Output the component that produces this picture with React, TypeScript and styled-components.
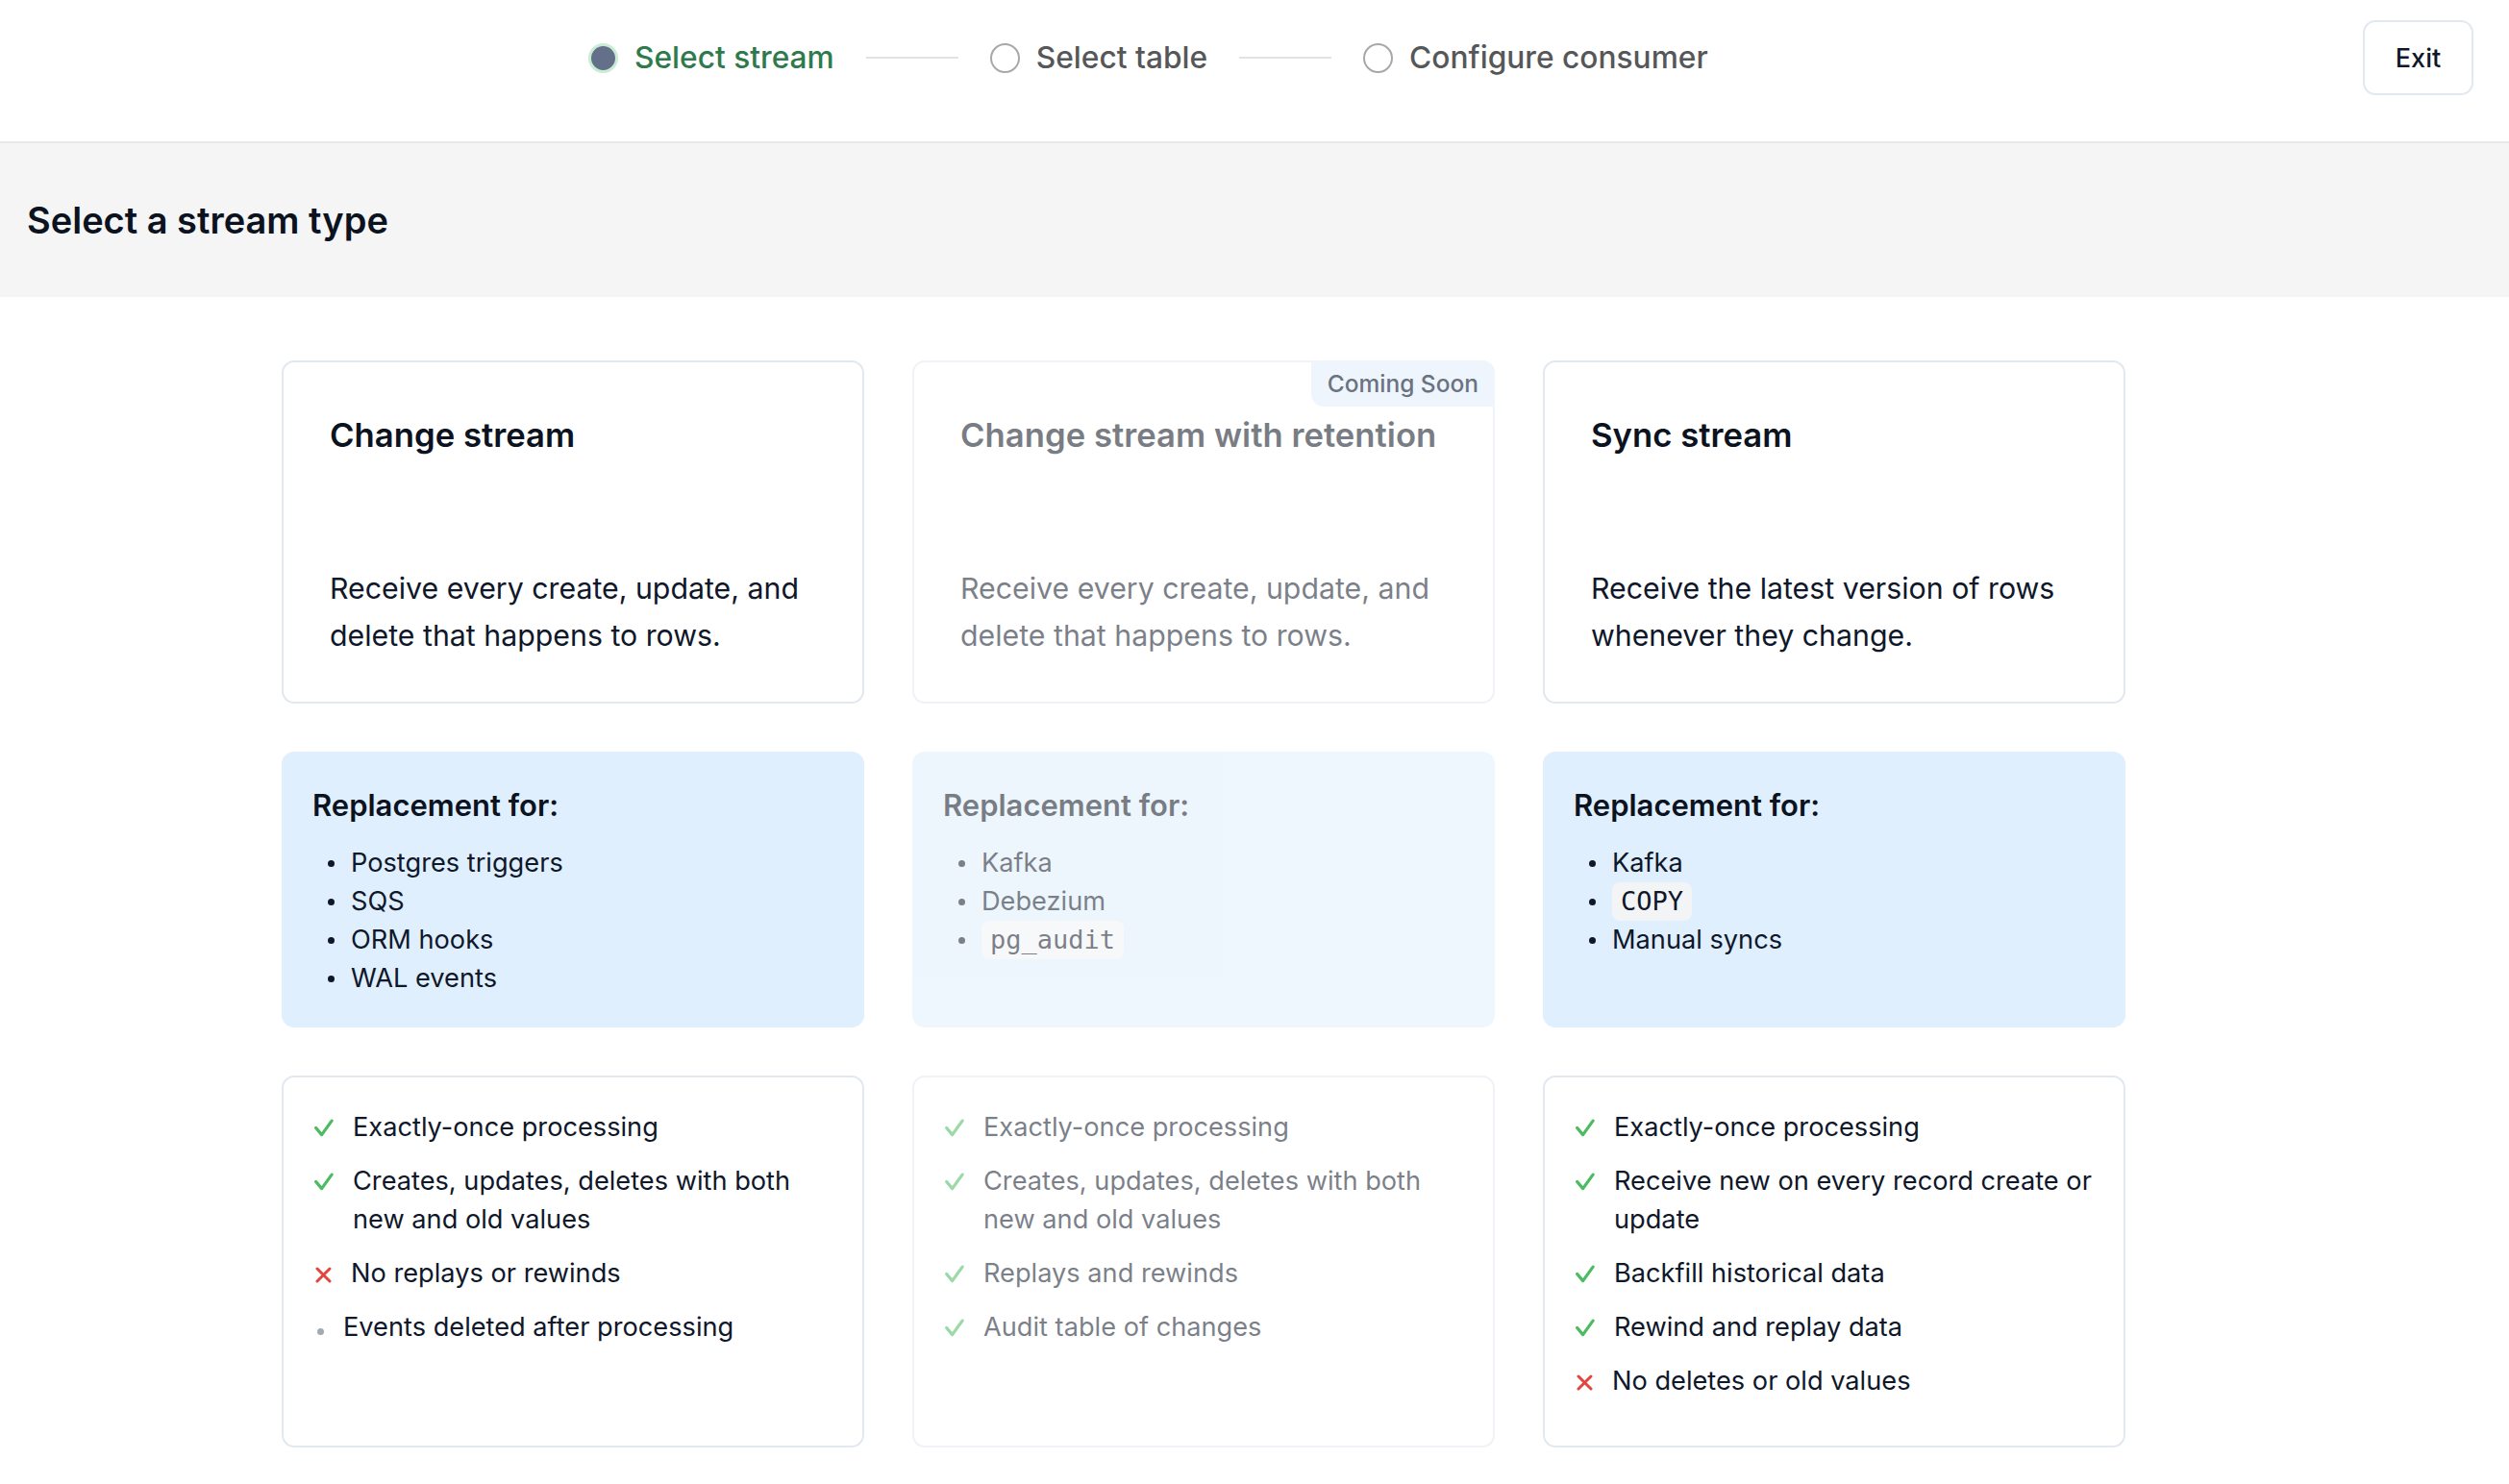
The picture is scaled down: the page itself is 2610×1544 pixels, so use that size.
import React from "react";
import styled, { createGlobalStyle, css } from "styled-components";

const GlobalStyle = createGlobalStyle`
  html, body { margin: 0; padding: 0; background: #ffffff; }
  body {
    font-family: Inter, "Noto Sans", "Liberation Sans", sans-serif;
    color: #0f172a;
    -webkit-font-smoothing: antialiased;
  }
  * { box-sizing: border-box; }
`;

const Header = styled.header`
  height: 149px;
  display: flex;
  align-items: flex-start;
  padding: 21px 37px 0 612px;
  border-bottom: 2px solid #e6e8ec;
  background: #ffffff;
`;

const Steps = styled.nav`
  height: 78px;
  display: flex;
  align-items: center;
  gap: 33px;
`;

const Step = styled.div`
  display: flex;
  align-items: center;
  gap: 17px;
`;

const StepDot = styled.span<{ $active?: boolean }>`
  width: 31px;
  height: 31px;
  border-radius: 50%;
  display: block;
  ${(p) =>
    p.$active
      ? css`
          background: #64708a;
          border: 3px solid #c9ecd5;
        `
      : css`
          background: #ffffff;
          border: 2px solid #a8a8a8;
        `}
`;

const StepLabel = styled.span<{ $active?: boolean }>`
  font-size: 31.7px;
  font-weight: 500;
  line-height: 42px;
  color: ${(p) => (p.$active ? "#2e7a4c" : "#555759")};
`;

const Connector = styled.span`
  width: 96px;
  height: 2px;
  background: #e2e2e2;
  display: block;
`;

const ExitButton = styled.button`
  margin-left: auto;
  width: 115px;
  height: 78px;
  border: 2px solid #e2e8f0;
  border-radius: 13px;
  background: #ffffff;
  font-family: inherit;
  font-size: 27px;
  font-weight: 500;
  color: #0f172a;
  cursor: pointer;
`;

const TitleBand = styled.section`
  height: 160px;
  background: #f5f5f5;
  display: flex;
  align-items: center;
  padding-left: 28px;
`;

const PageTitle = styled.h1`
  margin: 0;
  font-size: 38px;
  font-weight: 600;
  line-height: 56px;
  color: #0b1220;
`;

const Content = styled.main`
  padding: 66px 0 40px 293px;
`;

const Grid = styled.div`
  width: 1918px;
  display: grid;
  grid-template-columns: repeat(3, 1fr);
  column-gap: 50px;
  row-gap: 50px;
`;

const Dim = styled.div<{ $dim?: boolean }>`
  opacity: ${(p) => (p.$dim ? 0.55 : 1)};
  display: flex;
  flex-direction: column;
  height: 100%;
`;

const Cell = styled.div`
  position: relative;
`;

const TypeCard = styled.div`
  min-height: 357px;
  height: 100%;
  border: 2px solid #e2e8f0;
  border-radius: 13px;
  padding: 52px 48px 44px;
  display: flex;
  flex-direction: column;
  justify-content: space-between;
  background: #ffffff;
`;

const CardTitle = styled.h2`
  margin: 0;
  font-size: 34.7px;
  font-weight: 600;
  line-height: 47px;
  color: #0b1220;
`;

const CardDesc = styled.p`
  margin: 0;
  font-size: 30.3px;
  line-height: 49px;
  color: #0f172a;
`;

const Badge = styled.span`
  position: absolute;
  top: 0;
  right: 0;
  height: 48px;
  padding: 0 17px;
  display: flex;
  align-items: center;
  background: #eef5fd;
  color: #6b7280;
  font-size: 24.5px;
  font-weight: 500;
  border-radius: 0 13px 0 13px;
`;

const ReplaceBox = styled.div`
  height: 100%;
  min-height: 286px;
  background: #e0effd;
  border-radius: 13px;
  padding: 33px 32px 31px;
`;

const ReplaceTitle = styled.h3`
  margin: 0;
  font-size: 31px;
  font-weight: 600;
  line-height: 46px;
  color: #0b1220;
`;

const BulletList = styled.ul`
  list-style: none;
  margin: 17px 0 0;
  padding: 0;
`;

const BulletItem = styled.li`
  position: relative;
  padding-left: 40px;
  font-size: 27.2px;
  line-height: 40px;
  color: #0f172a;

  &::before {
    content: "";
    position: absolute;
    left: 16px;
    top: 17px;
    width: 7px;
    height: 7px;
    border-radius: 50%;
    background: #0f172a;
  }
`;

const Code = styled.code`
  display: inline-block;
  font-family: "DejaVu Sans Mono", "Liberation Mono", monospace;
  font-size: 27px;
  line-height: 40px;
  padding: 0 9px;
  border-radius: 8px;
  background: #f2f4f6;
  color: #0f172a;
`;

const FeatureCard = styled.div`
  height: 100%;
  min-height: 386px;
  border: 2px solid #e2e8f0;
  border-radius: 13px;
  padding: 32px 32px 47px;
  background: #ffffff;
`;

const FeatureList = styled.ul`
  list-style: none;
  margin: 0;
  padding: 0;
  display: flex;
  flex-direction: column;
  gap: 16px;
`;

const FeatureItem = styled.li`
  display: flex;
  align-items: flex-start;
  gap: 20px;
  font-size: 27.2px;
  line-height: 40px;
  color: #0f172a;
`;

const IconSlot = styled.span<{ $w: number; $ml?: number }>`
  flex: none;
  width: ${(p) => p.$w}px;
  margin-left: ${(p) => p.$ml ?? 0}px;
  height: 40px;
  display: flex;
  align-items: center;
  justify-content: center;
`;

const Dot = styled.span`
  width: 7px;
  height: 7px;
  border-radius: 50%;
  background: #a3a9b3;
  margin-top: 8px;
`;

type Kind = "check" | "cross" | "dot";

const FeatureIcon = ({ kind }: { kind: Kind }) => {
  if (kind === "check")
    return (
      <IconSlot $w={20}>
        <svg width="21" height="19" viewBox="0 0 21 19" fill="none">
          <path d="M1.8 9.5 L8 17 L19 1.8" stroke="#4cbb62" strokeWidth="3.4" strokeLinecap="round" strokeLinejoin="round" />
        </svg>
      </IconSlot>
    );
  if (kind === "cross")
    return (
      <IconSlot $w={17} $ml={1}>
        <svg width="17" height="17" viewBox="0 0 17 17" fill="none" style={{ marginTop: 3 }}>
          <path d="M2 2 L15 15 M15 2 L2 15" stroke="#e0463e" strokeWidth="3" strokeLinecap="round" />
        </svg>
      </IconSlot>
    );
  return (
    <IconSlot $w={7} $ml={3}>
      <Dot />
    </IconSlot>
  );
};

type Stream = {
  title: string;
  desc: string;
  disabled?: boolean;
  badge?: string;
  replaces: { text: string; code?: boolean }[];
  features: { kind: Kind; text: string }[];
};

const streams: Stream[] = [
  {
    title: "Change stream",
    desc: "Receive every create, update, and delete that happens to rows.",
    replaces: [
      { text: "Postgres triggers" },
      { text: "SQS" },
      { text: "ORM hooks" },
      { text: "WAL events" },
    ],
    features: [
      { kind: "check", text: "Exactly-once processing" },
      { kind: "check", text: "Creates, updates, deletes with both new and old values" },
      { kind: "cross", text: "No replays or rewinds" },
      { kind: "dot", text: "Events deleted after processing" },
    ],
  },
  {
    title: "Change stream with retention",
    desc: "Receive every create, update, and delete that happens to rows.",
    disabled: true,
    badge: "Coming Soon",
    replaces: [{ text: "Kafka" }, { text: "Debezium" }, { text: "pg_audit", code: true }],
    features: [
      { kind: "check", text: "Exactly-once processing" },
      { kind: "check", text: "Creates, updates, deletes with both new and old values" },
      { kind: "check", text: "Replays and rewinds" },
      { kind: "check", text: "Audit table of changes" },
    ],
  },
  {
    title: "Sync stream",
    desc: "Receive the latest version of rows whenever they change.",
    replaces: [{ text: "Kafka" }, { text: "COPY", code: true }, { text: "Manual syncs" }],
    features: [
      { kind: "check", text: "Exactly-once processing" },
      { kind: "check", text: "Receive new on every record create or update" },
      { kind: "check", text: "Backfill historical data" },
      { kind: "check", text: "Rewind and replay data" },
      { kind: "cross", text: "No deletes or old values" },
    ],
  },
];

export default function App() {
  return (
    <>
      <GlobalStyle />
      <Header>
        <Steps>
          <Step>
            <StepDot $active />
            <StepLabel $active>Select stream</StepLabel>
          </Step>
          <Connector />
          <Step>
            <StepDot />
            <StepLabel>Select table</StepLabel>
          </Step>
          <Connector />
          <Step>
            <StepDot />
            <StepLabel>Configure consumer</StepLabel>
          </Step>
        </Steps>
        <ExitButton>Exit</ExitButton>
      </Header>
      <TitleBand>
        <PageTitle>Select a stream type</PageTitle>
      </TitleBand>
      <Content>
        <Grid>
          {streams.map((s) => (
            <Cell key={"t" + s.title}>
              <Dim $dim={s.disabled}>
                <TypeCard>
                  <CardTitle>{s.title}</CardTitle>
                  <CardDesc>{s.desc}</CardDesc>
                </TypeCard>
              </Dim>
              {s.badge && <Badge>{s.badge}</Badge>}
            </Cell>
          ))}
          {streams.map((s) => (
            <Cell key={"r" + s.title}>
              <Dim $dim={s.disabled}>
                <ReplaceBox>
                  <ReplaceTitle>Replacement for:</ReplaceTitle>
                  <BulletList>
                    {s.replaces.map((r) => (
                      <BulletItem key={r.text}>{r.code ? <Code>{r.text}</Code> : r.text}</BulletItem>
                    ))}
                  </BulletList>
                </ReplaceBox>
              </Dim>
            </Cell>
          ))}
          {streams.map((s) => (
            <Cell key={"f" + s.title}>
              <Dim $dim={s.disabled}>
                <FeatureCard>
                  <FeatureList>
                    {s.features.map((f) => (
                      <FeatureItem key={f.text}>
                        <FeatureIcon kind={f.kind} />
                        <span>{f.text}</span>
                      </FeatureItem>
                    ))}
                  </FeatureList>
                </FeatureCard>
              </Dim>
            </Cell>
          ))}
        </Grid>
      </Content>
    </>
  );
}
